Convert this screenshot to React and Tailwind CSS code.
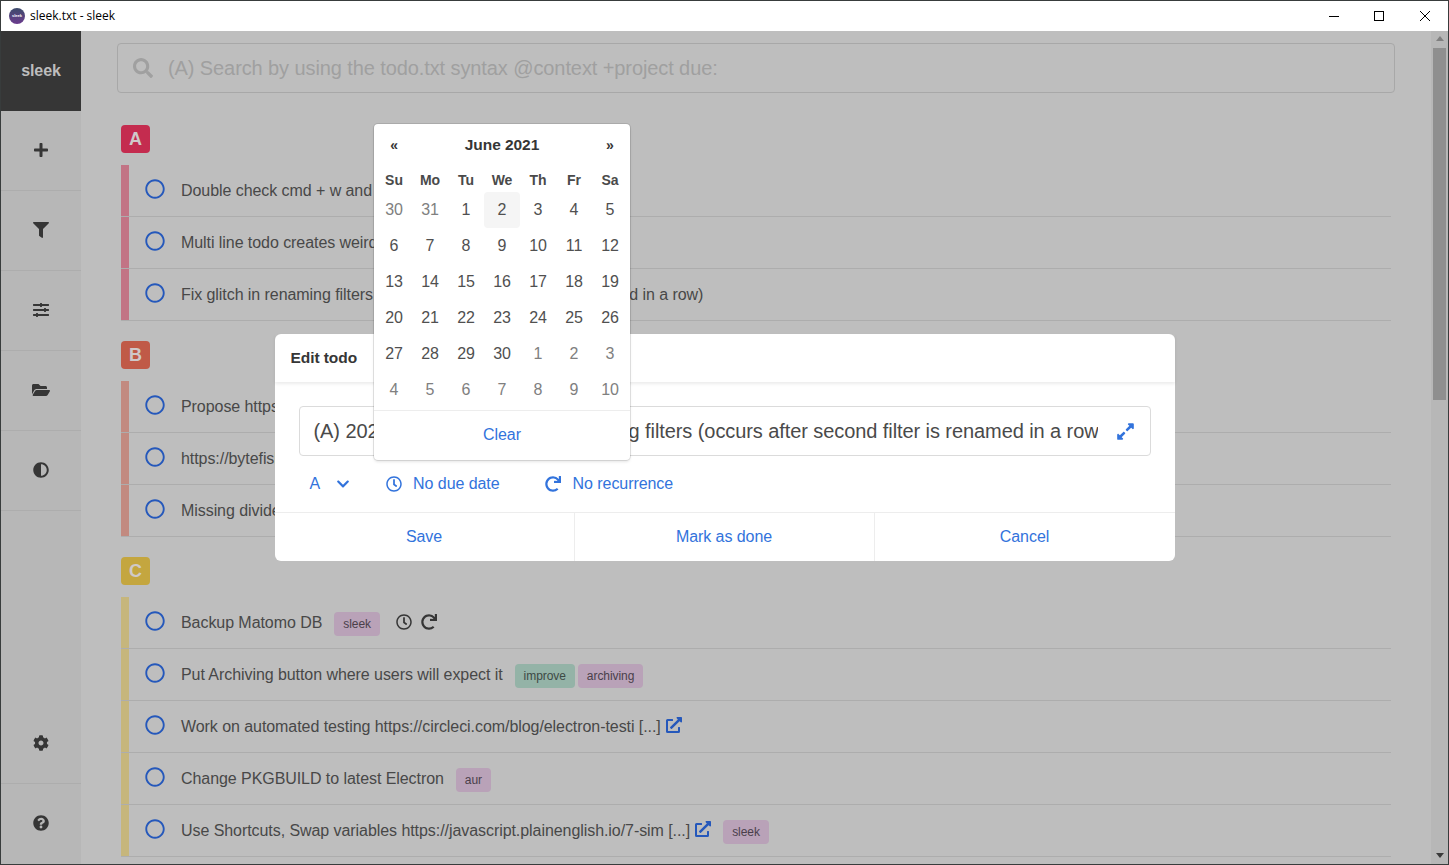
import {
  FaAdjust,
  FaChevronDown,
  FaCog,
  FaExpandAlt,
  FaExternalLinkAlt,
  FaFilter,
  FaFolderOpen,
  FaPlus,
  FaQuestionCircle,
  FaRedo,
  FaRegCircle,
  FaRegClock,
  FaSearch,
  FaSlidersH,
} from "react-icons/fa";

const groups = [
  {
    letter: "A",
    badge: "bg-[#c42c4f]",
    bar: "bg-[#c27485]",
    rows: [
      { text: "Double check cmd + w and cmd + q behaviour on MacOS" },
      { text: "Multi line todo creates weird spacing in the list view" },
      { text: "Fix glitch in renaming filters (occurs after second filter is renamed in a row)" },
    ],
  },
  {
    letter: "B",
    badge: "bg-[#c05a47]",
    bar: "bg-[#c28a80]",
    rows: [
      { text: "Propose https://github.com/ytdl-org for the download list" },
      { text: "https://bytefish.de/blog/electron-builder-notes" },
      { text: "Missing divider between the filter groups in the drawer" },
    ],
  },
  {
    letter: "C",
    badge: "bg-[#c4a63f]",
    bar: "bg-[#c6b67c]",
    rows: [
      { text: "Backup Matomo DB", tags: [["sleek", "purple"]], due: true },
      { text: "Put Archiving button where users will expect it", tags: [["improve", "green"], ["archiving", "purple"]] },
      { text: "Work on automated testing https://circleci.com/blog/electron-testi [...]", link: true },
      { text: "Change PKGBUILD to latest Electron", tags: [["aur", "purple"]] },
      { text: "Use Shortcuts, Swap variables https://javascript.plainenglish.io/7-sim [...]", link: true, tags: [["sleek", "purple"]] },
    ],
  },
];

const weeks = [
  [[30, 1], [31, 1], [1], [2], [3], [4], [5]],
  [[6], [7], [8], [9], [10], [11], [12]],
  [[13], [14], [15], [16], [17], [18], [19]],
  [[20], [21], [22], [23], [24], [25], [26]],
  [[27], [28], [29], [30], [1, 1], [2, 1], [3, 1]],
  [[4, 1], [5, 1], [6, 1], [7, 1], [8, 1], [9, 1], [10, 1]],
];

function SideItem({ icon: Icon, size = 16, border = true }) {
  return (
    <div className={`h-20 pb-[2px] flex items-center justify-center text-[#363636] ${border ? "border-b border-[#adadad]" : ""}`}>
      <Icon size={size} />
    </div>
  );
}

function Tag({ label, color }) {
  return (
    <span className={`h-6 px-[9px] flex items-center rounded-[4px] text-xs ${color === "green" ? "bg-[#94b3a7] text-[#3d4a45]" : "bg-[#b9a2b8] text-[#4a3f4a]"}`}>
      {label}
    </span>
  );
}

function Row({ row, bar }) {
  return (
    <div className="flex h-[52px] border-b border-[#adadad]">
      <div className={`w-2 h-[51px] ${bar}`} />
      <FaRegCircle size={20} className="ml-4 mt-[14px] text-[#2558bb]" />
      <div className="ml-4 mt-[14px] h-6 leading-6 text-[#484848] whitespace-nowrap">{row.text}</div>
      {row.link && <FaExternalLinkAlt size={16} className="ml-[5px] mt-[16px] text-[#2558bb]" />}
      {row.tags && (
        <div className="flex gap-[3px] mt-[15px] ml-3">
          {row.tags.map(([label, color]) => (
            <Tag key={label} label={label} color={color} />
          ))}
        </div>
      )}
      {row.due && (
        <div className="flex gap-[9px] ml-4 mt-[17px] text-[#363636]">
          <FaRegClock size={16} />
          <FaRedo size={16} />
        </div>
      )}
    </div>
  );
}

function DatePicker() {
  return (
    <div className="absolute left-[373px] top-[93px] w-[256px] h-[336px] p-[2px] rounded-[4px] bg-white shadow-[0_2px_3px_rgba(10,10,10,0.1),0_0_0_1px_rgba(10,10,10,0.1)]">
      <div className="flex items-center justify-between h-7 mt-[5px] text-[#363636]">
        <span className="w-9 text-center font-bold text-sm">«</span>
        <span className="font-bold text-[15.5px]">June 2021</span>
        <span className="w-9 text-center font-bold text-sm">»</span>
      </div>
      <div className="grid grid-cols-7 mt-[9px] h-6 items-center text-sm font-bold text-[#4a4a4a]">
        {["Su", "Mo", "Tu", "We", "Th", "Fr", "Sa"].map((d) => (
          <span key={d} className="text-center">{d}</span>
        ))}
      </div>
      <div className="grid grid-cols-7">
        {weeks.flat().map(([day, muted], i) => (
          <span
            key={i}
            className={`h-9 flex items-center justify-center rounded-[4px] ${muted ? "text-[#808080]" : "text-[#505050]"} ${i === 3 ? "bg-[#f5f5f5]" : ""}`}
          >
            {day}
          </span>
        ))}
      </div>
      <div className="mt-[2px] -mx-[2px] h-[49px] border-t border-[#ededed] flex items-center justify-center text-[#3273dc]">
        Clear
      </div>
    </div>
  );
}

function Modal() {
  return (
    <div className="absolute inset-0 flex items-center justify-center">
      <div className="w-[900px] h-[227px] rounded-[6px] bg-white flex flex-col">
        <div className="h-12 pl-4 flex items-center font-bold text-[15.5px] text-[#363636] shadow-[0_2px_3px_rgba(10,10,10,0.08)]">Edit todo</div>
        <div className="mt-6 mx-6 h-[50px] pl-[14px] pr-[15px] flex items-center rounded-[4px] border border-[#dbdbdb]">
          <input
            readOnly
            value="(A) 2021-05-30 Fix glitch in renaming filters (occurs after second filter is renamed in a row)"
            className="flex-1 min-w-0 text-xl tracking-[-0.004em] text-[#4a4a4a] outline-0"
          />
          <FaExpandAlt size={19} className="ml-[18px] text-[#3273dc]" />
        </div>
        <div className="h-[56px] flex items-center text-[#3273dc]">
          <span className="ml-[35px]">A</span>
          <FaChevronDown size={14} className="ml-4" />
          <FaRegClock size={16} className="ml-9" />
          <span className="ml-[11px]">No due date</span>
          <FaRedo size={16} className="ml-[45px]" />
          <span className="ml-3">No recurrence</span>
        </div>
        <div className="flex-1 grid grid-cols-3 border-t border-[#ededed] text-[#3273dc]">
          <div className="flex items-center justify-center border-r border-[#ededed]">Save</div>
          <div className="flex items-center justify-center border-r border-[#ededed]">Mark as done</div>
          <div className="flex items-center justify-center">Cancel</div>
        </div>
      </div>
    </div>
  );
}

export default function App() {
  return (
    <div className="h-[865px] flex flex-col overflow-hidden border border-[#383c3c] bg-[#bebebe] font-['Liberation_Sans',sans-serif] tracking-[-0.004em]">
      <header className="h-[30px] shrink-0 flex items-center bg-white tracking-normal">
        <div className="ml-2 w-4 h-4 rounded-full flex items-center justify-center bg-gradient-to-b from-[#3b4a6b] to-[#6b3a8e] text-white text-[4px] font-bold">
          sleek
        </div>
        <span className="ml-[5px] text-xs text-black font-['Open_Sans',sans-serif]">sleek.txt - sleek</span>
        <div className="ml-auto flex items-center">
          <svg width="12" height="12" viewBox="0 0 12 12" className="mr-[33px]">
            <path d="M1 6.5h10" stroke="#000" fill="none" />
          </svg>
          <svg width="12" height="12" viewBox="0 0 12 12" className="mr-[34px]">
            <rect x="1.5" y="1.5" width="9" height="9" stroke="#000" fill="none" />
          </svg>
          <svg width="12" height="12" viewBox="0 0 12 12" className="mr-[17px]">
            <path d="M1 1l10 10M11 1L1 11" stroke="#000" fill="none" />
          </svg>
        </div>
      </header>

      <div className="relative flex-1 min-h-0 flex">
        <aside className="w-20 shrink-0 flex flex-col bg-[#b7b7b7]">
          <div className="h-20 flex items-center justify-center bg-[#363636] text-[#bdbdbd] font-bold">sleek</div>
          <SideItem icon={FaPlus} />
          <SideItem icon={FaFilter} />
          <SideItem icon={FaSlidersH} />
          <SideItem icon={FaFolderOpen} size={18} />
          <SideItem icon={FaAdjust} />
          <div className="mt-auto">
            <SideItem icon={FaCog} />
            <SideItem icon={FaQuestionCircle} border={false} />
          </div>
        </aside>

        <main className="flex-1 min-w-0 overflow-hidden pt-3 pl-9 pr-9">
          <div className="h-[50px] flex items-center rounded-[4px] border border-[#a8a8a8] pl-[15px]">
            <FaSearch size={20} className="text-[#a0a0a0]" />
            <span className="ml-[15px] text-xl tracking-[-0.0048em] text-[#a0a0a0]">(A) Search by using the todo.txt syntax @context +project due:</span>
          </div>
          <div className="mt-8 px-1">
            {groups.map((group) => (
              <section key={group.letter} className="mb-5">
                <div className={`w-[29px] h-7 mb-3 flex items-center justify-center rounded-[4px] text-lg font-bold text-[#cfc9c9] ${group.badge}`}>
                  {group.letter}
                </div>
                {group.rows.map((row) => (
                  <Row key={row.text} row={row} bar={group.bar} />
                ))}
              </section>
            ))}
          </div>
        </main>

        <div className="w-[17px] shrink-0 flex flex-col items-center bg-[#b7b7b7]">
          <svg width="8" height="5" viewBox="0 0 8 5" className="mt-[5px]">
            <path d="M4 0l4 5H0z" fill="#7f7f7f" />
          </svg>
          <div className="mt-[7px] w-[13px] h-[352px] bg-[#8f8f8f]" />
          <svg width="8" height="5" viewBox="0 0 8 5" className="mt-auto mb-[6px]">
            <path d="M0 0h8L4 5z" fill="#3a3a3a" />
          </svg>
        </div>

        <Modal />
        <DatePicker />
      </div>
    </div>
  );
}
